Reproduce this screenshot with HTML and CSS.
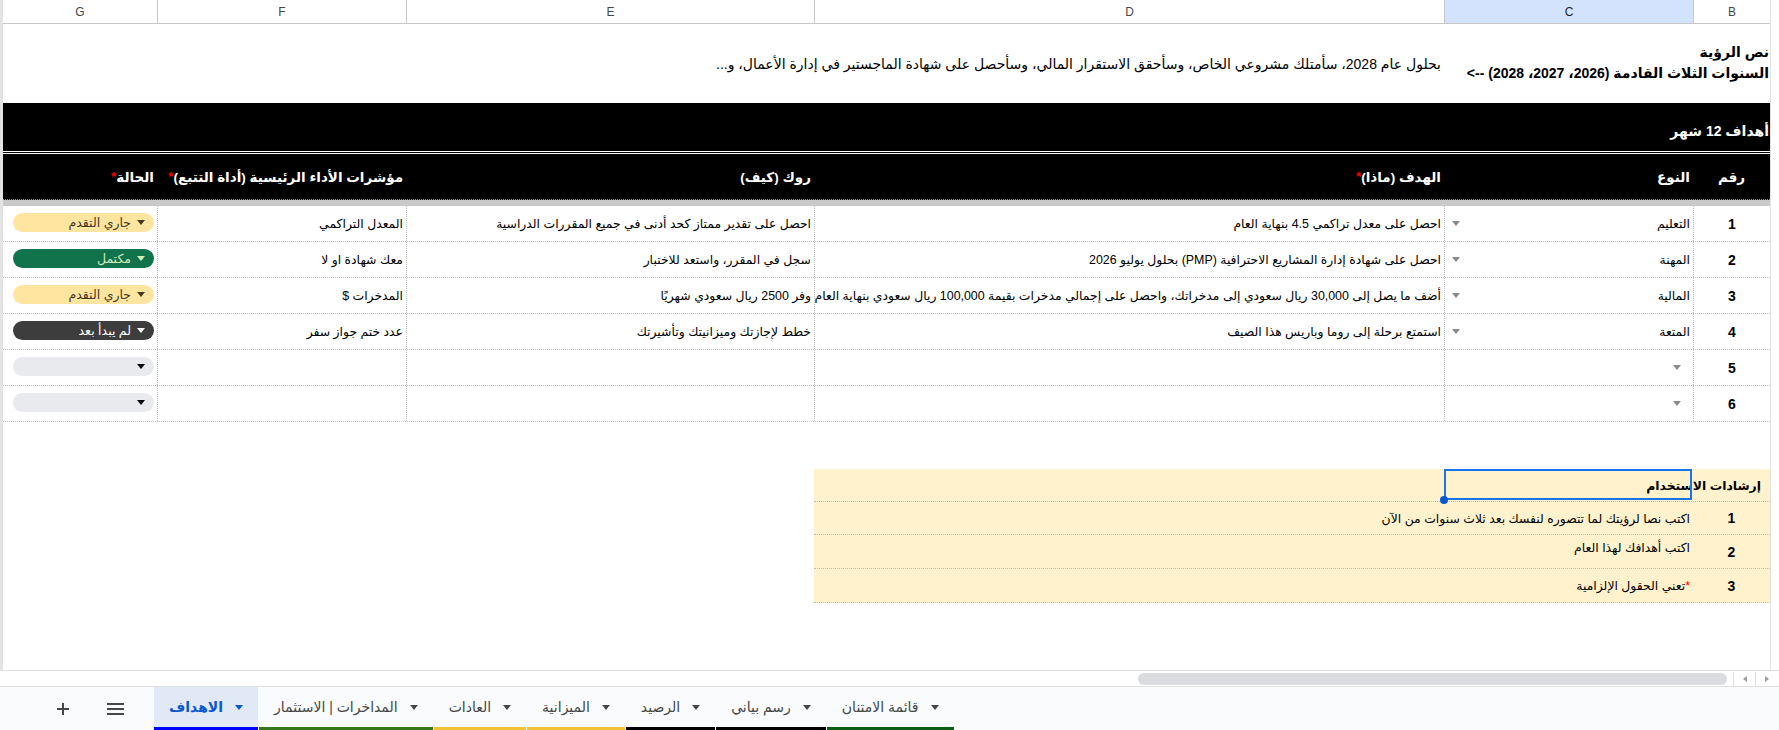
FILE: index.html
```html
<!DOCTYPE html>
<html lang="ar">
<head>
	<meta charset="utf-8">
	<title>الاهداف</title>
	<link rel="stylesheet" href="styles.css">
</head>
<body>
<div class="sheet">
	<div class="grid">
		<!-- رؤوس الأعمدة -->
		<div class="row colheads">
			<div class="ch">B</div>
			<div class="ch sel">C</div>
			<div class="ch">D</div>
			<div class="ch">E</div>
			<div class="ch">F</div>
			<div class="ch">G</div>
		</div>

		<!-- نص الرؤية -->
		<div class="row vision">
			<div class="vlabel">
				<span>نص الرؤية</span>
				<span>السنوات الثلاث القادمة (2026، 2027، 2028) --&gt;</span>
			</div>
			<div class="vtext">بحلول عام 2028، سأمتلك مشروعي الخاص، وسأحقق الاستقرار المالي، وسأحصل على شهادة الماجستير في إدارة الأعمال، و...</div>
		</div>

		<div class="goals">
			<div class="band">أهداف 12 شهر</div>
			<div class="row thead">
				<div class="th center">رقم</div>
				<div class="th">النوع</div>
				<div class="th">الهدف (ماذا)<span class="req">*</span></div>
				<div class="th">روك (كيف)</div>
				<div class="th">مؤشرات الأداء الرئيسية (أداة التتبع)<span class="req">*</span></div>
				<div class="th">الحالة<span class="req">*</span></div>
			</div>
		</div>
		<div class="freeze"></div>

		<!-- الأهداف -->
		<div class="row item">
			<div class="c num">1</div>
			<div class="c type"><span>التعليم</span><svg class="caret" viewBox="0 0 8 5"><path d="M0 0h8L4 5z"/></svg></div>
			<div class="c">احصل على معدل تراكمي 4.5 بنهاية العام</div>
			<div class="c">احصل على تقدير ممتاز كحد أدنى في جميع المقررات الدراسية</div>
			<div class="c">المعدل التراكمي</div>
			<div class="c status"><span class="pill doing"><svg class="caret" viewBox="0 0 8 5"><path d="M0 0h8L4 5z"/></svg>جاري التقدم</span></div>
		</div>
		<div class="row item">
			<div class="c num">2</div>
			<div class="c type"><span>المهنة</span><svg class="caret" viewBox="0 0 8 5"><path d="M0 0h8L4 5z"/></svg></div>
			<div class="c">احصل على شهادة إدارة المشاريع الاحترافية (PMP) بحلول يوليو 2026</div>
			<div class="c">سجل في المقرر، واستعد للاختبار</div>
			<div class="c">معك شهادة او لا</div>
			<div class="c status"><span class="pill done"><svg class="caret" viewBox="0 0 8 5"><path d="M0 0h8L4 5z"/></svg>مكتمل</span></div>
		</div>
		<div class="row item">
			<div class="c num">3</div>
			<div class="c type"><span>المالية</span><svg class="caret" viewBox="0 0 8 5"><path d="M0 0h8L4 5z"/></svg></div>
			<div class="c">أضف ما يصل إلى 30,000 ريال سعودي إلى مدخراتك، واحصل على إجمالي مدخرات بقيمة 100,000 ريال سعودي بنهاية العام</div>
			<div class="c">وفر 2500 ريال سعودي شهريًا</div>
			<div class="c">المدخرات $</div>
			<div class="c status"><span class="pill doing"><svg class="caret" viewBox="0 0 8 5"><path d="M0 0h8L4 5z"/></svg>جاري التقدم</span></div>
		</div>
		<div class="row item">
			<div class="c num">4</div>
			<div class="c type"><span>المتعة</span><svg class="caret" viewBox="0 0 8 5"><path d="M0 0h8L4 5z"/></svg></div>
			<div class="c">استمتع برحلة إلى روما وباريس هذا الصيف</div>
			<div class="c">خطط لإجازتك وميزانيتك وتأشيرتك</div>
			<div class="c">عدد ختم جواز سفر</div>
			<div class="c status"><span class="pill todo"><svg class="caret" viewBox="0 0 8 5"><path d="M0 0h8L4 5z"/></svg>لم يبدأ بعد</span></div>
		</div>
		<div class="row item">
			<div class="c num">5</div>
			<div class="c type empty"><svg class="caret" viewBox="0 0 8 5"><path d="M0 0h8L4 5z"/></svg></div>
			<div class="c"></div>
			<div class="c"></div>
			<div class="c"></div>
			<div class="c status"><span class="pill blank"><svg class="caret" viewBox="0 0 8 5"><path d="M0 0h8L4 5z"/></svg></span></div>
		</div>
		<div class="row item">
			<div class="c num">6</div>
			<div class="c type empty"><svg class="caret" viewBox="0 0 8 5"><path d="M0 0h8L4 5z"/></svg></div>
			<div class="c"></div>
			<div class="c"></div>
			<div class="c"></div>
			<div class="c status"><span class="pill blank"><svg class="caret" viewBox="0 0 8 5"><path d="M0 0h8L4 5z"/></svg></span></div>
		</div>

		<!-- إرشادات الاستخدام -->
		<div class="guide">
			<div class="grow ghead">
				<div class="gtitle">إرشادات الاستخدام</div>
				<div class="gsel"><span class="selbox"></span><span class="handle"></span></div>
				<div></div>
			</div>
			<div class="grow">
				<div class="gnum">1</div>
				<div class="gtext">اكتب نصا لرؤيتك لما تتصوره لنفسك بعد ثلاث سنوات من الآن</div>
			</div>
			<div class="grow tall">
				<div class="gnum">2</div>
				<div class="gtext top">اكتب أهدافك لهذا العام</div>
			</div>
			<div class="grow tall">
				<div class="gnum">3</div>
				<div class="gtext"><span class="req">*</span>تعني الحقول الإلزامية</div>
			</div>
		</div>
	</div>
	<div class="vbar"></div>
</div>

<div class="hscroll">
	<div class="thumb"></div>
	<div class="arr"><svg viewBox="0 0 4 6"><path d="M4 0v6L0 3z"/></svg></div>
	<div class="arr"><svg viewBox="0 0 4 6"><path d="M0 0v6l4-3z"/></svg></div>
</div>

<div class="tabbar">
	<div class="tbtn add"><svg width="14" height="14" viewBox="0 0 14 14"><path d="M7 1v12M1 7h12"/></svg></div>
	<div class="tbtn menu"><svg width="17" height="12" viewBox="0 0 17 12"><path d="M0 1h17M0 6h17M0 11h17"/></svg></div>
	<div class="tab active blue"><span>الاهداف</span><svg class="caret" viewBox="0 0 8 5"><path d="M0 0h8L4 5z"/></svg></div>
	<div class="tab green"><span>المداخرات | الاستثمار</span><svg class="caret" viewBox="0 0 8 5"><path d="M0 0h8L4 5z"/></svg></div>
	<div class="tab yellow"><span>العادات</span><svg class="caret" viewBox="0 0 8 5"><path d="M0 0h8L4 5z"/></svg></div>
	<div class="tab yellow"><span>الميزانية</span><svg class="caret" viewBox="0 0 8 5"><path d="M0 0h8L4 5z"/></svg></div>
	<div class="tab black"><span>الرصيد</span><svg class="caret" viewBox="0 0 8 5"><path d="M0 0h8L4 5z"/></svg></div>
	<div class="tab black"><span>رسم بياني</span><svg class="caret" viewBox="0 0 8 5"><path d="M0 0h8L4 5z"/></svg></div>
	<div class="tab dgreen"><span>قائمة الامتنان</span><svg class="caret" viewBox="0 0 8 5"><path d="M0 0h8L4 5z"/></svg></div>
</div>
</body>
</html>
```

FILE: styles.css
```css
*{
	margin: 0;
	padding: 0;
	box-sizing: border-box;
}
body{
	width: 1779px;
	height: 730px;
	overflow: hidden;
	background: #fff;
	font-family: Arial, "Liberation Sans", "DejaVu Sans", sans-serif;
	font-size: 12.4px;
	color: #000;
}

/* منطقة الجدول */
.sheet{
	display: flex;
	height: 670px;
	border-left: 3px solid #e3e3e3;
	overflow: hidden;
}
.grid{
	width: 1767px;
	direction: rtl;
}
.vbar{
	flex: 1;
	border-left: 1px solid #e3e3e3;
}
.row{
	display: grid;
	grid-template-columns: 77px 249px 630px 408px 249px 154px;
}

.colheads{
	height: 24px;
	border-bottom: 1px solid #c7c7c7;
}
.ch{
	display: flex;
	align-items: center;
	justify-content: center;
	border-left: 1px solid #c7c7c7;
	color: #444746;
	font-family: "Liberation Sans", Arial, sans-serif;
	font-size: 12px;
}
.ch:last-child{
	border-left: none;
}
.ch.sel{
	background: #d3e3fd;
	color: #1f1f1f;
}

.vision{
	height: 79px;
}
.vlabel{
	grid-column: span 2;
	display: flex;
	flex-direction: column;
	justify-content: center;
	padding: 0 1px 2px 0;
	font-weight: bold;
	font-size: 14px;
	line-height: 21px;
	white-space: nowrap;
}
.vtext{
	display: flex;
	align-items: center;
	padding: 0 3px 0 0;
	font-size: 14px;
	white-space: nowrap;
}

/* الشريط الأسود */
.goals{
	background: #000;
	border-top: 3px double #000;
	color: #fff;
	font-weight: bold;
	font-size: 14px;
}
.band{
	height: 48px;
	display: flex;
	align-items: flex-end;
	padding: 0 1px 12px 0;
	border-bottom: 3px double #fff;
}
.thead{
	height: 46px;
	border-bottom: 1px dotted #9a9a9a;
	font-size: 13.5px;
}
.th{
	display: flex;
	align-items: center;
	padding: 0 3px;
	white-space: nowrap;
}
.th.center{
	justify-content: center;
}
.req{
	color: #ff0000;
}
.freeze{
	height: 6px;
	background: #c9c9c9;
}

/* صفوف الأهداف */
.item{
	height: 36px;
	border-bottom: 1px dotted #bdbdbd;
}
.c{
	display: flex;
	align-items: center;
	padding: 0 3px;
	border-left: 1px dotted #bdbdbd;
	white-space: nowrap;
	overflow: hidden;
}
.c:last-child{
	border-left: none;
}
.num{
	justify-content: center;
	font-weight: bold;
	font-size: 14px;
}
.caret{
	width: 8px;
	height: 5px;
	fill: currentColor;
	flex: none;
}
.type .caret{
	margin-right: auto;
	margin-left: 4px;
	color: #8a8a8a;
}
.type.empty .caret{
	margin: 0 9px 0 0;
}
.status{
	padding: 0 3px 3px 10px;
}
.pill{
	flex: 1;
	height: 19px;
	border-radius: 10px;
	display: flex;
	align-items: center;
	gap: 6px;
	padding: 0 9px;
	font-size: 12.5px;
}
.pill.doing{
	background: #ffe5a0;
	color: #473821;
}
.pill.done{
	background: #11734b;
	color: #d4edbc;
}
.pill.todo{
	background: #3d3d3d;
	color: #fff;
}
.pill.blank{
	background: #e8eaed;
	color: #000;
}

/* إرشادات الاستخدام */
.guide{
	width: 956px;
	margin-top: 47px;
	background: #fff2cc;
}
.grow{
	display: grid;
	grid-template-columns: 77px 249px 630px;
	height: 33px;
	border-bottom: 1px dotted #bdbdbd;
}
.grow.tall{
	height: 34px;
}
.gtitle{
	display: flex;
	align-items: center;
	padding-right: 9px;
	font-weight: bold;
	white-space: nowrap;
}
.gsel{
	position: relative;
}
.selbox{
	position: absolute;
	top: 0;
	right: 1px;
	bottom: 1px;
	left: 0;
	border: 2px solid #1a73e8;
}
.handle{
	position: absolute;
	left: -4px;
	bottom: -3px;
	width: 8px;
	height: 8px;
	border-radius: 50%;
	background: #0b57d0;
}
.gnum{
	display: flex;
	align-items: center;
	justify-content: center;
	font-weight: bold;
	font-size: 14px;
}
.gtext{
	grid-column: span 2;
	display: flex;
	align-items: center;
	padding-right: 3px;
	white-space: nowrap;
}
.gtext.top{
	align-items: flex-start;
	padding-top: 5px;
}

/* شريط التمرير */
.hscroll{
	height: 16px;
	border-top: 1px solid #e0e0e0;
	display: flex;
	justify-content: flex-end;
	align-items: center;
	padding-right: 2px;
}
.thumb{
	width: 589px;
	height: 12px;
	border-radius: 6px;
	background: #dadce0;
	margin-right: 6px;
}
.arr{
	width: 22px;
	height: 14px;
	border-left: 1px solid #e0e0e0;
	display: flex;
	align-items: center;
	justify-content: center;
}
.arr svg{
	width: 4px;
	height: 6px;
	fill: #9aa0a6;
}

/* أوراق العمل */
.tabbar{
	height: 44px;
	background: #f9fbfd;
	border-top: 1px solid #e0e0e0;
	display: flex;
	padding-left: 51px;
}
.tbtn{
	width: 24px;
	display: flex;
	align-items: center;
	justify-content: center;
}
.tbtn path{
	stroke: #444746;
	stroke-width: 2;
	fill: none;
}
.tbtn.menu{
	margin-left: 28px;
	margin-right: 27px;
}
.tab{
	display: flex;
	align-items: center;
	gap: 12px;
	padding: 0 15px;
	margin-right: 1px;
	border-bottom: 3px solid;
	color: #444746;
	font-size: 14px;
	white-space: nowrap;
}
.tab .caret{
	color: #444746;
}
.tab.active{
	background: #e1e9f7;
	color: #0b57d0;
	font-weight: bold;
}
.tab.active .caret{
	color: #0b57d0;
}
.tab.blue{ border-bottom-color: #0000ff; }
.tab.green{ border-bottom-color: #38761d; }
.tab.yellow{ border-bottom-color: #f1c232; }
.tab.black{ border-bottom-color: #000; }
.tab.dgreen{ border-bottom-color: #0b5e14; }
```
